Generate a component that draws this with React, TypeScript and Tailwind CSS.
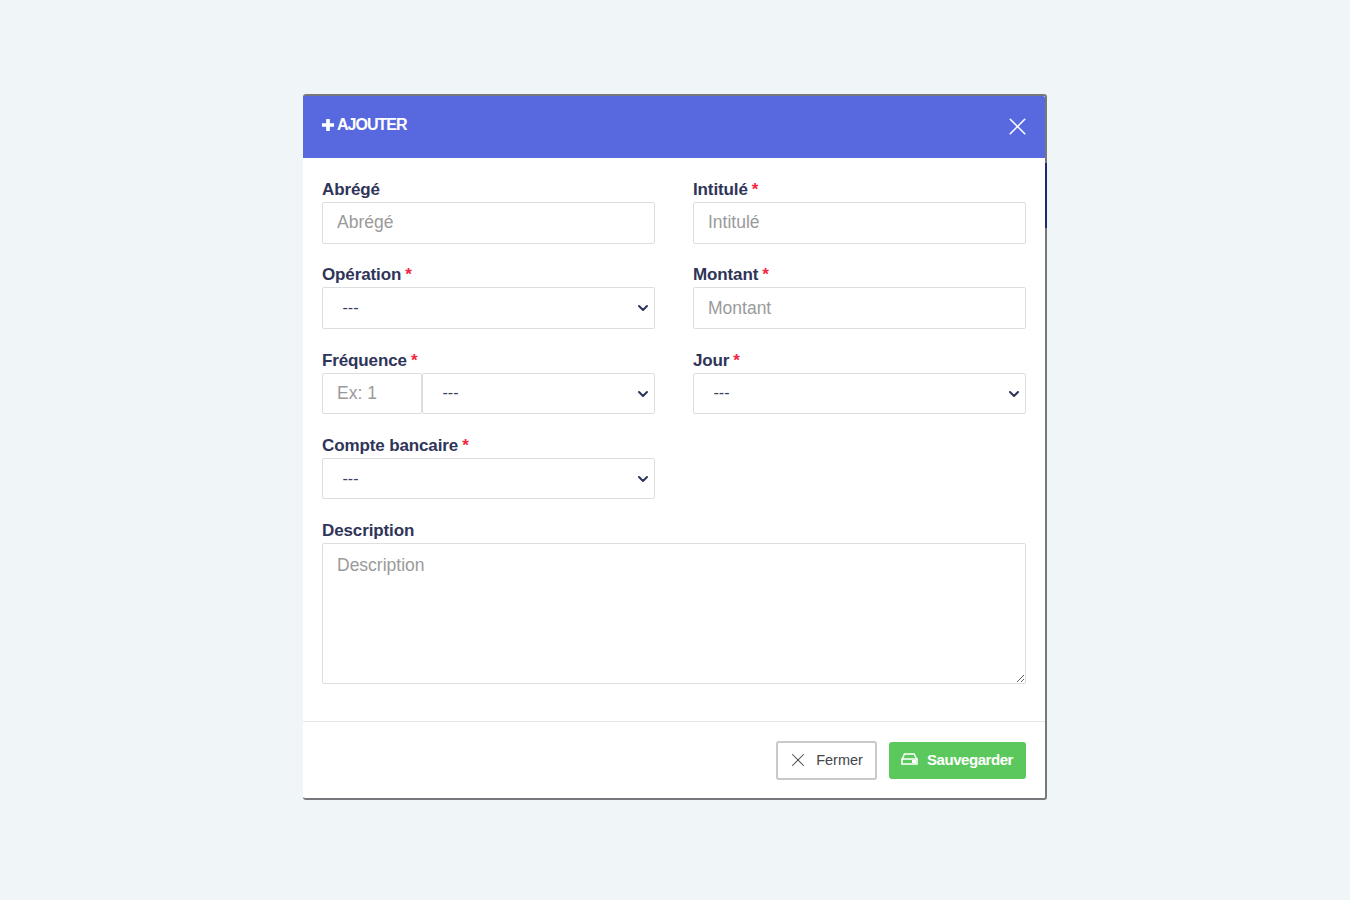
import { ChevronDown, X } from 'lucide-react';

const font = { fontFamily: '"Liberation Sans", Arial, sans-serif' };

function Label({ text, required }: { text: string; required?: boolean }) {
  return (
    <label className="block h-[22px] text-[17px] leading-[20px] font-bold tracking-[-0.12px] text-[#2f3459]">
      {text}
      {required && <span className="ml-[4px] text-[#f5263f]">*</span>}
    </label>
  );
}

function TextInput({ placeholder, className = 'w-full' }: { placeholder: string; className?: string }) {
  return (
    <input
      placeholder={placeholder}
      className={`block h-[41.5px] rounded-[2px] border-[1.5px] border-[#dcdedf] bg-white px-[14px] text-[17.5px] outline-none placeholder:text-[#9a9a9a] ${className}`}
    />
  );
}

function SelectInput({ className = 'w-full' }: { className?: string }) {
  return (
    <div className={`relative ${className}`}>
      <select className="block h-[41.5px] w-full appearance-none rounded-[2px] border-[1.5px] border-[#dcdedf] bg-white px-[19.5px] text-[16px] text-[#3a3f63] outline-none">
        <option>---</option>
      </select>
      <ChevronDown
        size={16}
        strokeWidth={3}
        className="pointer-events-none absolute top-[13px] right-[4px] text-[#2f3459]"
      />
    </div>
  );
}

export default function App() {
  return (
    <div className="flex min-h-[900px] items-start justify-center bg-[#f0f5f8] pt-[94px]" style={font}>
      <div className="relative w-[744px] rounded-[3px] border-t-2 border-r-2 border-b-2 border-[#77787c] bg-white">
        {/* dark stretch on the right edge */}
        <div className="absolute top-[67px] right-[-2px] h-[65px] w-[2px] bg-[#1c2a6b]" />

        <div className="flex h-[62px] items-center justify-between rounded-tr-[2px] bg-[#5869df] pr-[13px] pl-[18px] text-white">
          <div className="mt-[-5px] flex items-center gap-[2px] text-[16px] font-bold tracking-[-1px]">
            <svg width="14" height="14" viewBox="0 0 14 14" fill="white">
              <path d="M5.2 1h3.6v4.2H13v3.6H8.8V13H5.2V8.8H1V5.2h4.2z" />
            </svg>
            AJOUTER
          </div>
          <X size={29} strokeWidth={1.3} className="mt-[-2px]" />
        </div>

        <div className="grid grid-cols-2 gap-x-[38px] gap-y-[21.75px] px-[19px] pt-[22px] pb-[37px]">
          <div>
            <Label text="Abrégé" />
            <TextInput placeholder="Abrégé" />
          </div>
          <div>
            <Label text="Intitulé" required />
            <TextInput placeholder="Intitulé" />
          </div>
          <div>
            <Label text="Opération" required />
            <SelectInput />
          </div>
          <div>
            <Label text="Montant" required />
            <TextInput placeholder="Montant" />
          </div>
          <div>
            <Label text="Fréquence" required />
            <div className="flex">
              <TextInput placeholder="Ex: 1" className="w-[100px]" />
              <SelectInput className="flex-1" />
            </div>
          </div>
          <div>
            <Label text="Jour" required />
            <SelectInput />
          </div>
          <div>
            <Label text="Compte bancaire" required />
            <SelectInput />
          </div>
          <div />
          <div className="col-span-2">
            <Label text="Description" />
            <textarea
              placeholder="Description"
              className="block h-[141px] w-full rounded-[2px] border-[1.5px] border-[#dcdedf] bg-white px-[14px] py-[8px] text-[17.5px] outline-none placeholder:text-[#9a9a9a]"
            />
          </div>
        </div>

        <div className="flex h-[77px] items-start justify-end gap-[12px] border-t border-[#e6e8ea] px-[19px] pt-[19px]">
          <button className="flex h-[39px] w-[101px] items-center justify-center gap-[7px] rounded-[3px] border-2 border-[#c8c9cb] bg-white pr-[3px] text-[14.5px] text-[#44464b]">
            <X size={22} strokeWidth={1.1} className="mt-[-2px]" />
            Fermer
          </button>
          <button className="mt-[1px] flex h-[37px] w-[137px] items-center justify-center gap-[9px] rounded-[3px] bg-[#5bc85e] pr-[1px] text-[15px] font-bold tracking-[-0.45px] text-white">
            <svg width="17" height="12" viewBox="0 0 17 12" className="mt-[-3px]">
              <path d="M1.4 6 3.4 1h9.8l2.4 5" fill="none" stroke="white" strokeWidth="1.5" />
              <path d="M1 6h15v5H1z" fill="none" stroke="white" strokeWidth="1.6" />
              <path d="M11 7h4v3h-4z" fill="white" />
            </svg>
            Sauvegarder
          </button>
        </div>
      </div>
    </div>
  );
}
